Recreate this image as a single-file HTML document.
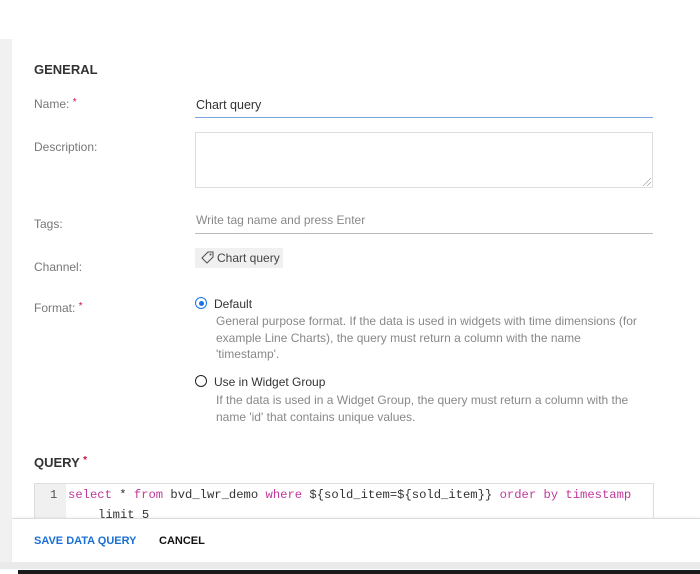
<!DOCTYPE html>
<html><head><style>
body{margin:0;width:700px;height:574px;overflow:hidden;background:#fff;font-family:"Liberation Sans",sans-serif;position:relative}
.a{position:absolute}
.lbl{color:#777;font-size:12px}
.req{color:#d0103a;font-size:10px;vertical-align:top}
.code{font-family:"Liberation Mono",monospace;font-size:12.2px}
.k{color:#c0389b}
</style></head><body>
<div class="a" style="left:0;top:39px;width:12px;height:523px;background:#f1f1f2"></div>
<div class="a" style="left:34px;top:62px;font-weight:bold;font-size:13px;color:#333">GENERAL</div>
<div class="a lbl" style="left:34px;top:97px">Name: <span class="req">*</span></div>
<div class="a" style="left:196px;top:98px;font-size:12.5px;color:#333">Chart query</div>
<div class="a" style="left:195px;top:117px;width:458px;height:1px;background:#7aa4dc"></div>
<div class="a lbl" style="left:34px;top:140px">Description:</div>
<div class="a" style="left:195px;top:132px;width:456px;height:54px;border:1px solid #ddd"></div>
<div class="a" style="left:643px;top:178px;width:8px;height:8px;background:linear-gradient(135deg,transparent 45%,#999 50%,transparent 55%,transparent 70%,#999 75%,transparent 80%)"></div>
<div class="a lbl" style="left:34px;top:217px">Tags:</div>
<div class="a" style="left:196px;top:213px;font-size:12px;color:#888">Write tag name and press Enter</div>
<div class="a" style="left:195px;top:233px;width:458px;height:1px;background:#bbb"></div>
<div class="a" style="left:195px;top:248px;width:88px;height:20px;background:#f0f0f0"></div>
<svg class="a" style="left:201px;top:251px" width="13" height="13" viewBox="0 0 13 13"><path d="M7 1h5v5l-6 6-5-5z" fill="none" stroke="#555" stroke-width="1.1"/><circle cx="9.5" cy="3.5" r="1" fill="#555"/></svg>
<div class="a" style="left:217px;top:251px;font-size:12px;color:#444">Chart query</div>
<div class="a lbl" style="left:34px;top:260px">Channel:</div>
<div class="a lbl" style="left:34px;top:301px">Format: <span class="req">*</span></div>
<div class="a" style="left:195px;top:297px;width:10px;height:10px;border:1.5px solid #1a73e8;border-radius:50%"></div>
<div class="a" style="left:199px;top:301px;width:5px;height:5px;background:#1a73e8;border-radius:50%"></div>
<div class="a" style="left:214px;top:297px;font-size:12px;color:#333">Default</div>
<div class="a" style="left:216px;top:313px;font-size:12px;color:#888;line-height:16.5px;width:432px">General purpose format. If the data is used in widgets with time dimensions (for example Line Charts), the query must return a column with the name<br>'timestamp'.</div>
<div class="a" style="left:195px;top:375px;width:10px;height:10px;border:1.5px solid #222;border-radius:50%"></div>
<div class="a" style="left:214px;top:375px;font-size:12px;color:#333">Use in Widget Group</div>
<div class="a" style="left:216px;top:392px;font-size:12px;color:#888;line-height:16.5px;width:432px">If the data is used in a Widget Group, the query must return a column with the name 'id' that contains unique values.</div>
<div class="a" style="left:34px;top:455px;font-weight:bold;font-size:13px;color:#333">QUERY <span class="req">*</span></div>
<div class="a" style="left:34px;top:483px;width:618px;height:40px;border:1px solid #ddd"></div>
<div class="a" style="left:35px;top:484px;width:31px;height:40px;background:#f0f0f0"></div>
<div class="a code" style="left:50px;top:488px;color:#555">1</div>
<div class="a code" style="left:68px;top:488px;color:#333;white-space:pre"><span class="k">select</span> * <span class="k">from</span> bvd_lwr_demo <span class="k">where</span> ${sold_item=${sold_item}} <span class="k">order by timestamp</span></div>
<div class="a code" style="left:98px;top:508px;color:#333">limit 5</div>
<div class="a" style="left:12px;top:518px;width:688px;height:44px;background:#fff;border-top:1px solid #ddd;box-shadow:0 -1px 2px rgba(0,0,0,.05)"></div>
<div class="a" style="left:34px;top:535px;font-weight:bold;font-size:11px;color:#1a6fd4">SAVE DATA QUERY</div>
<div class="a" style="left:159px;top:535px;font-weight:bold;font-size:11px;color:#111">CANCEL</div>
<div class="a" style="left:0;top:562px;width:700px;height:7px;background:#eaeaea"></div>
<div class="a" style="left:18px;top:570px;width:682px;height:4px;background:#1a1a1a"></div>
</body></html>
